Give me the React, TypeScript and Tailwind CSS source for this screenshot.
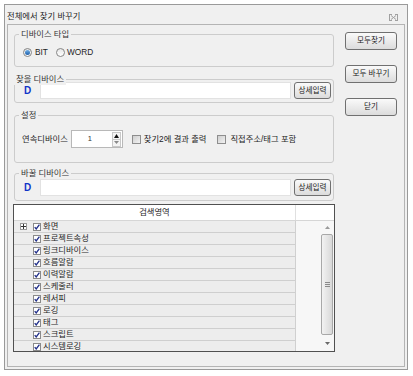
import React from 'react';

const FONT = '"Liberation Sans", "Noto Sans CJK KR", sans-serif';

// 그룹박스 (라벨이 테두리 위에 걸침)
function Group({ label, className, labelClass, children }: { label: string; className: string; labelClass?: string; children: React.ReactNode }) {
  return (
    <div className={`relative rounded-[3px] border border-[#cccccc] ${className}`}>
      <span className={`absolute -top-[6px] bg-[#f0f0f0] px-[2px] text-[8.3px] leading-[11px] text-[#333] ${labelClass ?? 'left-[4px]'}`}>
        {label}
      </span>
      {children}
    </div>
  );
}

function Btn({ children, className }: { children: React.ReactNode; className: string }) {
  return (
    <button className={`flex items-center justify-center rounded-[3px] border border-[#707070] bg-linear-to-b from-[#fafafa] to-[#dcdcdc] text-[7.6px] leading-none text-[#222] ${className}`}>
      {children}
    </button>
  );
}

function Radio({ checked }: { checked?: boolean }) {
  return (
    <span className="flex h-[9px] w-[9px] items-center justify-center rounded-full border border-[#858585] bg-linear-to-b from-[#e6e6e6] to-[#ffffff]">
      {checked && <span className="h-[5px] w-[5px] rounded-full bg-linear-to-b from-[#6fb0e8] to-[#1d5ea8]" />}
    </span>
  );
}

function CheckOff() {
  return (
    <span className="flex h-[9px] w-[9px] items-center justify-center border border-[#8e8e8e] bg-white">
      <span className="h-[7px] w-[7px] bg-linear-to-br from-[#cfcfcf] to-[#f2f2f2]" />
    </span>
  );
}

function CheckOn() {
  return (
    <span className="flex h-[8px] w-[8px] shrink-0 items-center justify-center border border-[#8a8a8a] bg-white">
      <svg width="6" height="6" viewBox="0 0 6 6">
        <path d="M0.7 3.2 L2.2 5 L5.4 0.6" fill="none" stroke="#22308a" strokeWidth="1.3" />
      </svg>
    </span>
  );
}

function DeviceRow() {
  return (
    <div className="flex h-[17px] items-center pl-[9px]">
      <span className="w-[16px] text-[10px] font-bold leading-none text-[#1034c8]">D</span>
      <div className="h-[17px] w-[251px] border border-[#e2e2e2] bg-white" />
      <Btn className="ml-[3px] h-[17px] w-[37px]">상세입력</Btn>
    </div>
  );
}

const AREAS = ['화면', '프로젝트속성', '링크디바이스', '흐름알람', '이력알람', '스케줄러', '레서피', '로깅', '태그', '스크립트', '시스템로깅'];

export default function App() {
  return (
    <div className="h-[376px] w-[413px] overflow-hidden bg-white pt-[4px] pl-[4px] text-[#1e1e1e]" style={{ fontFamily: FONT }}>
      <div className="flex h-[366px] w-[404px] flex-col border border-[#9a9a9a] bg-[#f0f0f0]">
        {/* 타이틀 */}
        <div className="flex h-[19px] shrink-0 items-start justify-between pt-[5px] pl-[2px] pr-[9px]">
          <span className="text-[8.3px] leading-[12px]">전체에서 찾기 바꾸기</span>
          <svg width="9" height="7" viewBox="0 0 9 7" className="mt-[4px]">
            <path d="M0 0.5h3 M6 0.5h3 M0 6.5h3 M6 6.5h3 M0.5 0v7 M8.5 0v7 M2 1.5 L7 5.5 M7 1.5 L2 5.5" stroke="#a0a0a0" strokeWidth="1" fill="none" />
          </svg>
        </div>

        <div className="mx-[2px] mb-[2px] flex flex-1 border border-[#b4b4b4] pl-[6px]">
          {/* 왼쪽 */}
          <div className="flex w-[320px] flex-col">
            <Group label="디바이스 타입" className="mt-[9px] h-[33px]">
              <div className="flex h-full items-center pt-[4px] pl-[8px] text-[8.3px]">
                <Radio checked />
                <span className="ml-[3px]">BIT</span>
                <span className="ml-[8px]"><Radio /></span>
                <span className="ml-[2px]">WORD</span>
              </div>
            </Group>

            <Group label="찾을 디바이스" className="mt-[12px] h-[24px]" labelClass="left-[-1px]">
              <div className="pt-[2px]">
                <DeviceRow />
              </div>
            </Group>

            <Group label="설정" className="mt-[12px] h-[48px]">
              <div className="mt-[14px] flex h-[18px] items-center pl-[7px] text-[8.3px]">
                <span>연속디바이스</span>
                <div className="ml-[3px] flex h-[18px] w-[52px] items-center border border-[#b8b8b8] bg-white">
                  <span className="flex-1 pl-[16px] text-[7.5px] text-[#333]">1</span>
                  <div className="mr-[1px] flex h-[15px] w-[9px] flex-col">
                    <div className="flex flex-1 items-center justify-center border border-[#c8c8c8] bg-[#f4f4f4]">
                      <svg width="5" height="4" viewBox="0 0 5 4"><path d="M2.5 0 L5 4 L0 4 Z" fill="#111" /></svg>
                    </div>
                    <div className="flex flex-1 items-center justify-center border border-t-0 border-[#c8c8c8] bg-[#f4f4f4]">
                      <svg width="5" height="3" viewBox="0 0 5 3"><path d="M0 0 L5 0 L2.5 3 Z" fill="#8a8a8a" /></svg>
                    </div>
                  </div>
                </div>
                <span className="ml-[9px]"><CheckOff /></span>
                <span className="ml-[3px]">찾기2에 결과 출력</span>
                <span className="ml-[11px]"><CheckOff /></span>
                <span className="ml-[4px]">직접주소/태그 포함</span>
              </div>
            </Group>

            <Group label="바꿀 디바이스" className="mt-[10px] h-[28px]">
              <div className="pt-[5px]">
                <DeviceRow />
              </div>
            </Group>

            {/* 검색영역 */}
            <div className="-mx-[1px] mt-[3px] flex h-[148px] w-[322px] flex-col overflow-hidden border border-[#505050] bg-white">
              <div className="flex h-[16px] shrink-0 border-b border-[#d6d6d6]">
                <div className="flex w-[282px] items-center justify-center border-r border-[#e0e0e0] text-[8.3px] leading-none">검색영역</div>
                <div className="flex-1" />
              </div>
              <div className="flex min-h-0 flex-1">
                <div className="w-[282px] overflow-hidden border-r border-[#d0d0d0]">
                  {AREAS.map((a, i) => (
                    <div key={a} className="flex h-[12px] items-center border-b border-[#cfcfcf] bg-[#ededed] pl-[6px] text-[8.3px] leading-none">
                      {i === 0 ? (
                        <span className="flex h-[7px] w-[7px] shrink-0 items-center justify-center border border-[#9a9a9a] bg-white">
                          <svg width="5" height="5" viewBox="0 0 5 5"><path d="M0 2.5h5 M2.5 0v5" stroke="#333" strokeWidth="1" /></svg>
                        </span>
                      ) : (
                        <span className="w-[7px] shrink-0" />
                      )}
                      <span className="ml-[6px]"><CheckOn /></span>
                      <span className="ml-[2px]">{a}</span>
                    </div>
                  ))}
                </div>
                <div className="flex flex-1 justify-end bg-[#f7f7f7] pr-[1px]">
                  <div className="flex w-[12px] flex-col">
                    <div className="flex h-[12px] items-center justify-center">
                      <svg width="5" height="3" viewBox="0 0 5 3"><path d="M2.5 0 L5 3 L0 3 Z" fill="#9a9a9a" /></svg>
                    </div>
                    <div className="mt-[1px] flex h-[101px] items-center justify-center rounded-[2px] border border-[#a8a8a8] bg-linear-to-r from-[#f2f2f2] to-[#d8d8d8]">
                      <svg width="5" height="5" viewBox="0 0 5 5"><path d="M0 0.5h5 M0 2.5h5 M0 4.5h5" stroke="#8a8a8a" strokeWidth="1" /></svg>
                    </div>
                    <div className="flex flex-1 items-center justify-center">
                      <svg width="5" height="3" viewBox="0 0 5 3"><path d="M0 0 L5 0 L2.5 3 Z" fill="#6a6a6a" /></svg>
                    </div>
                  </div>
                </div>
              </div>
            </div>
          </div>

          {/* 오른쪽 버튼 */}
          <div className="ml-[11px] flex flex-col">
            <Btn className="mt-[7px] h-[18px] w-[52px]">모두찾기</Btn>
            <Btn className="mt-[15px] h-[18px] w-[52px]">모두 바꾸기</Btn>
            <Btn className="mt-[15px] h-[18px] w-[52px]">닫기</Btn>
          </div>
        </div>
      </div>
    </div>
  );
}
